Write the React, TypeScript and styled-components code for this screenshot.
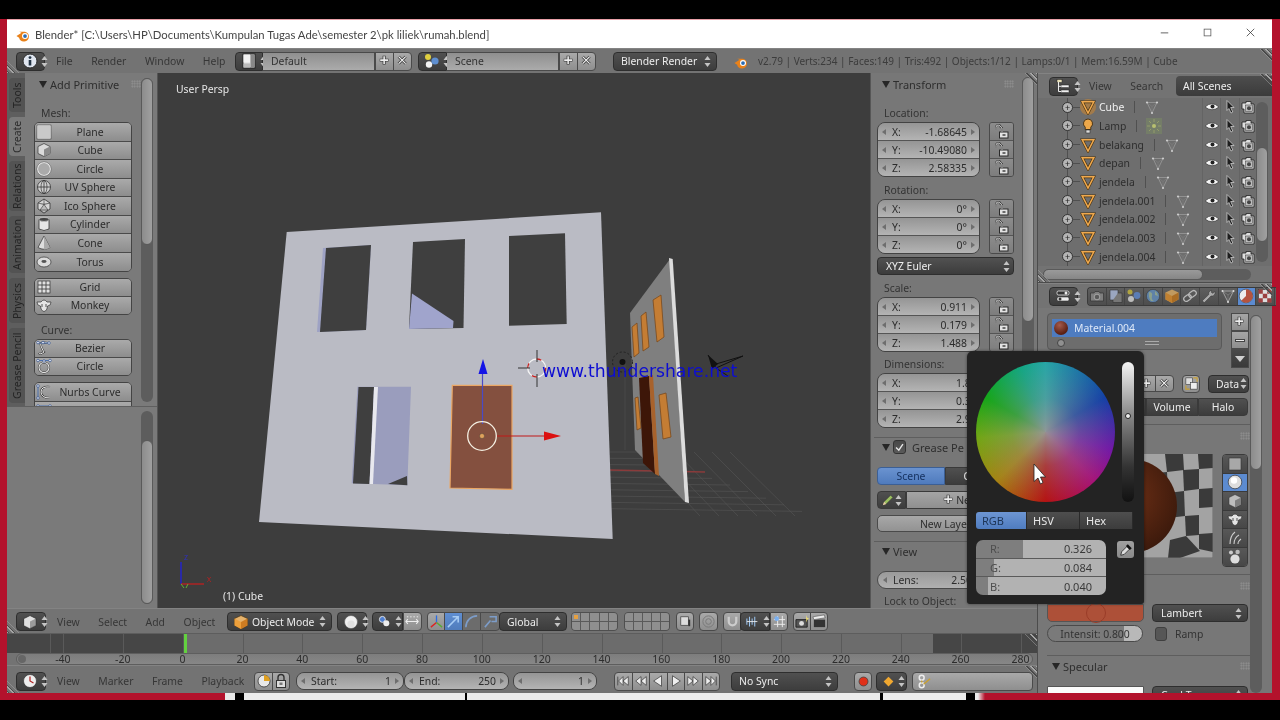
import React from 'react';
import styled, { createGlobalStyle } from 'styled-components';

const Global = createGlobalStyle`
  html,body{margin:0;padding:0;background:#000;overflow:hidden}
  #root{width:1280px;height:720px}
  *{box-sizing:border-box}
`;

const Page = styled.div`
  width:1280px;height:720px;background:#000;display:flex;flex-direction:column;overflow:hidden;
  font-family:"Noto Sans","Open Sans",sans-serif;font-size:10.4px;color:#333;filter:blur(.45px);
`;
const Letterbox = styled.div<{ $h: number }>`height:${p => p.$h}px;flex:none;background:#000;`;
const Desktop = styled.div`height:674px;flex:none;background:#b3122c;padding:0 8px 0 7px;`;
const Strip = styled.div`
  height:7px;flex:none;
  background:linear-gradient(90deg,#b3122c 225px,#e8e8e8 225px,#e8e8e8 235px,#000 235px,#000 244px,#ececec 244px,#ececec 465px,#000 465px,#000 467px,#ececec 467px,#ececec 880px,#000 880px,#000 883px,#ececec 883px,#ececec 966px,#000 966px,#000 975px,#ececec 975px,#ececec 978px,#b3122c 985px);
`;
const Win = styled.div`position:relative;height:100%;display:flex;flex-direction:column;`;
const TitleBar = styled.div`
  height:29px;flex:none;background:#fff;border-top:1px solid #e8a0a8;display:flex;align-items:center;padding-left:9px;gap:4px;
  font-size:11.3px;color:#444;font-family:Lato,"Noto Sans",sans-serif;
`;
const WinBtn = styled.div`width:43px;display:flex;justify-content:center;`;
const WinBtns = styled.div`margin-left:auto;margin-right:-1px;display:flex;`;

const Svg = styled.svg.attrs<{ $s?: number }>(p => ({ width: p.$s ?? 16, height: p.$s ?? 16, viewBox: '0 0 16 16' }))`display:block;flex:none;`;
const UD = styled.svg.attrs({ width: 7, height: 13, viewBox: '0 0 7 13' })`display:block;flex:none;`;
const Updown = ({ c = '#c4c4c4' }: { c?: string }) => <UD><path d="M3.5 1L6.5 5H.5ZM3.5 12L.5 8h6Z" fill={c} /></UD>;

/* ---------- icons ---------- */
const Logo = () => <Svg $s={15}><path d="M0.5 9.5L6 6 3.5 5H9.5a5.3 5.3 0 1 1-6.2 6.5Z" fill="#e8811a" /><circle cx="9.6" cy="9.6" r="3.2" fill="#fff" /><circle cx="9.6" cy="9.6" r="2" fill="#2a6cb5" /></Svg>;
const Info = () => <Svg><circle cx="8" cy="8" r="7" fill="#e0e6f0" stroke="#2a2a2a" /><rect x="6.7" y="7" width="2.6" height="5.5" fill="#234" /><circle cx="8" cy="4.6" r="1.4" fill="#234" /></Svg>;
const Screen = () => <Svg><rect x="2" y="1" width="12" height="14" fill="#ddd" stroke="#222" /><rect x="2.5" y="1.5" width="6.5" height="8" fill="#f2f2f2" /><rect x="9.5" y="1.5" width="4" height="13" fill="#888" /><rect x="2.5" y="10.5" width="6.5" height="4" fill="#bbb" /></Svg>;
const SceneI = () => <Svg><circle cx="4" cy="4" r="3" fill="#e0d040" /><circle cx="5" cy="11.5" r="3.2" fill="#f2f2f2" /><circle cx="11" cy="8" r="3.6" fill="#5f8fd0" /></Svg>;
const Plus = ({ c = '#eee' }: { c?: string }) => <Svg $s={14}><path d="M7 2V12M2 7H12" stroke="#333" strokeWidth="3.4" /><path d="M7 2.5V11.5M2.5 7H11.5" stroke={c} strokeWidth="1.8" /></Svg>;
const Cross = () => <Svg $s={14}><path d="M3 3L11 11M11 3L3 11" stroke="#333" strokeWidth="3.2" /><path d="M3 3L11 11M11 3L3 11" stroke="#eee" strokeWidth="1.5" /></Svg>;
const Lock = () => <Svg><rect x="5.5" y="8" width="8.5" height="6" fill="#e2e2e2" stroke="#2a2a2a" /><rect x="8.5" y="10" width="3" height="2" fill="#6a6a6a" /><path d="M2 6V3.5A2.2 2.2 0 0 1 6.5 3L8 4V8" fill="none" stroke="#1e1e1e" strokeWidth="1.7" /><path d="M2 6V3.5A2.2 2.2 0 0 1 6.5 3L8 4V8" fill="none" stroke="#fff" strokeWidth=".8" /></Svg>;
const LockClosed = () => <Svg><rect x="3.5" y="7.5" width="9" height="7" fill="#ddd" stroke="#333" /><rect x="6.5" y="9.5" width="3" height="2.5" fill="#777" /><path d="M5 7.5V4.5a3 3 0 0 1 6 0V7.5" fill="none" stroke="#333" strokeWidth="1.4" /></Svg>;
const Bulb = () => <Svg><path d="M8 1a4.6 4.6 0 0 0-2.8 8.2V11.5H10.8V9.2A4.6 4.6 0 0 0 8 1Z" fill="#eea84a" stroke="#4a3416" /><rect x="6" y="12" width="4" height="3" fill="#ddd" stroke="#333" strokeWidth=".6" /></Svg>;
const Tri = ({ glow }: { glow?: boolean }) => <Svg>{glow && <circle cx="8" cy="8" r="8" fill="#b5803f" opacity=".75" />}<path d="M2.2 2.8H13.8L8 14Z" fill="none" stroke="#4b3412" strokeWidth="2.8" /><path d="M2.2 2.8H13.8L8 14Z" fill="none" stroke="#f0a94e" strokeWidth="1.5" /></Svg>;
const MeshData = () => <Svg><path d="M3 3.5H13L8 14Z" fill="none" stroke="#9a9a9a" strokeWidth=".8" /><path d="M3 3.5L8 7.5L13 3.5M8 7.5V14" fill="none" stroke="#8a8a8a" strokeWidth=".4" /><circle cx="3" cy="3.5" r="1.1" fill="#ccc" /><circle cx="13" cy="3.5" r="1.1" fill="#ccc" /><circle cx="8" cy="14" r="1.1" fill="#ccc" /></Svg>;
const LampData = () => <Svg><rect width="16" height="16" fill="#7a8a64" opacity=".55" /><circle cx="8" cy="8" r="2" fill="#b8c070" /><path d="M8 1V4M8 12V15M1 8H4M12 8H15M3 3L5 5M13 3L11 5M3 13L5 11M13 13L11 11" stroke="#939c6a" /></Svg>;
const Eye = () => <Svg><path d="M1 8Q8 1.5 15 8Q8 13.5 1 8Z" fill="#f4f4f4" stroke="#3a3a3a" strokeWidth=".7" /><circle cx="8.5" cy="7.6" r="2" fill="#222" /></Svg>;
const Pointer = () => <Svg><path d="M5 1.5L12 8.5H8.7L10.8 13L9 14L6.9 9.5L5 11.5Z" fill="#1e1e1e" stroke="#ddd" strokeWidth=".7" /></Svg>;
const Cam = () => <Svg><path d="M2 4H6V2.5H11V5H14V14H4V10H2Z" fill="#dedede" stroke="#222" strokeWidth=".8" /><rect x="5.5" y="6" width="7" height="6.6" fill="#bdbdbd" stroke="#333" strokeWidth=".5" /><circle cx="9" cy="9.3" r="2" fill="#444" /></Svg>;
const Cube = ({ c = '#e0e0e0' }: { c?: string }) => <Svg><path d="M8 1.5L14 4.5V11.5L8 14.5L2 11.5V4.5Z" fill={c} stroke="#333" strokeWidth=".8" /><path d="M2 4.5L8 7.5V14.5L2 11.5Z" fill={c} opacity=".7" /><path d="M8 7.5L14 4.5V11.5L8 14.5Z" fill="#777" opacity=".65" /></Svg>;
const OrangeCube = () => <Svg><path d="M8 1.5L14.5 4.5V11.5L8 15L1.5 11.5V4.5Z" fill="#e6b36c" stroke="#4a3312" strokeWidth=".7" /><path d="M8 8V15L14.5 11.5V4.5Z" fill="#cd7c22" /><path d="M8 8V15L1.5 11.5V4.5Z" fill="#eda03c" /></Svg>;
const Ball = () => <Svg><circle cx="8" cy="8" r="6.5" fill="#f0f0f0" stroke="#555" strokeWidth=".6" /><circle cx="8" cy="10" r="3.6" fill="#cfcfcf" opacity=".5" /></Svg>;
const Wire = ({ children }: { children?: React.ReactNode }) => <Svg>{children}</Svg>;
const prim: Record<string, React.ReactNode> = {
  plane: <Wire><rect x="1.5" y="1.5" width="13" height="13" fill="#c9c9c9" stroke="#eee" /><rect x="1" y="1" width="14" height="14" fill="none" stroke="#444" strokeWidth=".6" /></Wire>,
  cube: <Wire><path d="M8 1.5L14 4.5V11.5L8 14.5L2 11.5V4.5Z" fill="#dadada" stroke="#333" strokeWidth=".7" /><path d="M8 7.5L14 4.5V11.5L8 14.5Z" fill="#8a8a8a" /></Wire>,
  circle: <Wire><circle cx="8" cy="8" r="6.5" fill="#aaa" stroke="#eee" strokeWidth="1.2" /><circle cx="8" cy="8" r="7.2" fill="none" stroke="#444" strokeWidth=".4" /></Wire>,
  uv: <Wire><circle cx="8" cy="8" r="6.5" fill="#d0d0d0" stroke="#333" strokeWidth=".8" /><path d="M1.5 8H14.5M8 1.5V14.5" stroke="#333" strokeWidth=".8" /><ellipse cx="8" cy="8" rx="3" ry="6.5" fill="none" stroke="#333" strokeWidth=".7" /></Wire>,
  ico: <Wire><path d="M8 1L14 5L14 11L8 15L2 11L2 5Z" fill="#d6d6d6" stroke="#333" strokeWidth=".8" /><path d="M2 5L8 6.5L14 5M8 6.5L4 12H12ZM8 6.5V1M4 12L8 15L12 12" fill="#bbb" stroke="#333" strokeWidth=".6" /></Wire>,
  cyl: <Wire><path d="M3 3V13Q8 16 13 13V3" fill="#e6e6e6" stroke="#333" strokeWidth=".8" /><ellipse cx="8" cy="3.4" rx="5" ry="2" fill="#444" stroke="#ddd" strokeWidth=".6" /></Wire>,
  cone: <Wire><path d="M8 1L14 12.5Q8 16 2 12.5Z" fill="#dedede" stroke="#333" strokeWidth=".7" /><path d="M8 1L14 12.5Q11 14.5 8 14.5Z" fill="#aaa" /></Wire>,
  torus: <Wire><ellipse cx="8" cy="8" rx="7" ry="5" fill="#dcdcdc" stroke="#333" strokeWidth=".7" /><ellipse cx="8" cy="7.5" rx="2.6" ry="1.4" fill="#555" /></Wire>,
  grid: <Wire><rect x="2" y="2" width="12" height="12" fill="#e0e0e0" stroke="#333" strokeWidth=".7" /><path d="M6 2V14M10 2V14M2 6H14M2 10H14" stroke="#444" strokeWidth=".9" /></Wire>,
  monkey: <Wire><path d="M5 5Q8 1 11 5L15 5Q15 9 11.5 9Q11 14 8 14.5Q5 14 4.5 9Q1 9 1 5Z" fill="#e4e4e4" stroke="#333" strokeWidth=".7" /><path d="M6 7V10M10 7V10" stroke="#444" strokeWidth=".9" /></Wire>,
  bezier: <Wire><path d="M12 3Q3 1 5 6T8 12 Q4 15 3 13" fill="none" stroke="#333" strokeWidth="2" /><path d="M12 3Q3 1 5 6T8 12 Q4 15 3 13" fill="none" stroke="#e8e8e8" strokeWidth="1" /><path d="M1 3H13" stroke="#4c72b0" /><circle cx="2" cy="2.6" r="1.3" fill="#e8eef8" stroke="#34508a" strokeWidth=".7" /><circle cx="7" cy="2.6" r="1.3" fill="#e8eef8" stroke="#34508a" strokeWidth=".7" /><circle cx="13" cy="3" r="1.3" fill="#e8eef8" stroke="#34508a" strokeWidth=".7" /></Wire>,
  ccircle: <Wire><circle cx="8" cy="9.5" r="5" fill="none" stroke="#333" strokeWidth="2.2" /><circle cx="8" cy="9.5" r="5" fill="none" stroke="#eee" strokeWidth="1.1" /><path d="M1 2.5H15" stroke="#4c72b0" /><circle cx="2" cy="2.5" r="1.3" fill="#e8eef8" stroke="#34508a" strokeWidth=".7" /><circle cx="8" cy="3" r="1.3" fill="#e8eef8" stroke="#34508a" strokeWidth=".7" /><circle cx="14" cy="2.5" r="1.3" fill="#e8eef8" stroke="#34508a" strokeWidth=".7" /></Wire>,
  nurbs: <Wire><path d="M14 3Q5 2 5 8T14 14" fill="none" stroke="#333" strokeWidth="2" /><path d="M14 3Q5 2 5 8T14 14" fill="none" stroke="#eee" strokeWidth="1" /><path d="M2 2V14" stroke="#4c72b0" /><circle cx="2" cy="2" r="1.3" fill="#e8eef8" stroke="#34508a" strokeWidth=".7" /><circle cx="2" cy="14" r="1.3" fill="#e8eef8" stroke="#34508a" strokeWidth=".7" /></Wire>,
  ncircle: <Wire><path d="M2 14Q8 2 14 14" fill="none" stroke="#eee" strokeWidth="1.1" /><path d="M1 3H15" stroke="#4c72b0" /><circle cx="2" cy="3" r="1.3" fill="#e8eef8" stroke="#34508a" strokeWidth=".7" /><circle cx="14" cy="3" r="1.3" fill="#e8eef8" stroke="#34508a" strokeWidth=".7" /></Wire>,
};
const Outl = () => <Svg><rect x="2" y="1.5" width="5" height="3" fill="#e8e0b8" stroke="#222" strokeWidth=".5" /><rect x="6" y="7" width="8" height="2.6" fill="#f0f0f0" stroke="#222" strokeWidth=".5" /><rect x="6" y="12" width="8" height="2.6" fill="#f0f0f0" stroke="#222" strokeWidth=".5" /><path d="M3.5 4V13.5H6M3.5 8.3H6" stroke="#eee" strokeWidth="1" fill="none" /></Svg>;
const PropsI = () => <Svg><rect x="2" y="3" width="12" height="4" rx="1.5" fill="#333" stroke="#eee" strokeWidth=".8" /><circle cx="11" cy="5" r="1.5" fill="#eee" /><rect x="2" y="9" width="12" height="4" rx="1.5" fill="#eee" stroke="#333" strokeWidth=".6" /><circle cx="5" cy="11" r="1.5" fill="#333" /></Svg>;
const tabIcons: React.ReactNode[] = [
  <Svg key="0"><path d="M1.5 5H5L6 3.5H10L11 5H14.5V13H1.5Z" fill="#7f7f7f" stroke="#333" strokeWidth=".7" /><circle cx="8" cy="9" r="2.8" fill="#5a5a5a" stroke="#bbb" strokeWidth=".7" /></Svg>,
  <Svg key="1"><path d="M2 2H10V12H2Z" fill="#9aa6c0" stroke="#333" strokeWidth=".6" /><path d="M5 12V14.5H14V5H10" fill="#777" stroke="#333" strokeWidth=".6" /></Svg>,
  <Svg key="2"><circle cx="4" cy="4" r="2.5" fill="#b0a440" /><circle cx="5" cy="11" r="3" fill="#bdbdbd" /><circle cx="11" cy="7.5" r="3.4" fill="#5b7db5" /></Svg>,
  <Svg key="3"><circle cx="8" cy="8" r="6.6" fill="#5f82a8" stroke="#333" strokeWidth=".5" /><path d="M4 4Q8 4 7 8T9 13L6 13Q3 9 4 4ZM10 3Q13 5 13 8L10 7Z" fill="#8aa08c" /></Svg>,
  <Svg key="4"><path d="M8 1.5L14.5 4.5V11.5L8 15L1.5 11.5V4.5Z" fill="#c09a60" /><path d="M8 8V15L14.5 11.5V4.5Z" fill="#aa6d24" /><path d="M8 8V15L1.5 11.5V4.5Z" fill="#c08030" /></Svg>,
  <Svg key="5"><rect x="1.5" y="7.5" width="8" height="5" rx="2.5" transform="rotate(-35 5.5 10)" fill="none" stroke="#b8b8b8" strokeWidth="1.3" /><rect x="6.5" y="3.5" width="8" height="5" rx="2.5" transform="rotate(-35 10.5 6)" fill="none" stroke="#b8b8b8" strokeWidth="1.3" /></Svg>,
  <Svg key="6"><path d="M2 14L3.5 14.5L10 8A3.5 3.5 0 0 0 14 3.5L11.8 5.3L10.5 4.5L10.5 2.4A3.5 3.5 0 0 0 7.8 6.5L1.5 12.5Z" fill="#aaa" stroke="#333" strokeWidth=".5" /></Svg>,
  <Svg key="7"><path d="M2.5 3H13.5L8 14Z" fill="none" stroke="#b5b5b5" strokeWidth=".8" /><path d="M2.5 3L8 7L13.5 3M8 7V14" fill="none" stroke="#aaa" strokeWidth=".4" /><circle cx="2.5" cy="3" r="1" fill="#ddd" /><circle cx="13.5" cy="3" r="1" fill="#ddd" /><circle cx="8" cy="14" r="1" fill="#ddd" /></Svg>,
  <Svg key="8"><circle cx="8" cy="8" r="6.8" fill="#ececec" stroke="#333" strokeWidth=".6" /><path d="M8 1.2A6.8 6.8 0 0 1 14.8 8L8 8L3.2 12.8A6.8 6.8 0 0 0 8 14.8A6.8 6.8 0 0 0 14.8 8L8 8Z" fill="#b5533f" /></Svg>,
  <Svg key="9"><rect x="1.5" y="1.5" width="13" height="13" fill="#ddd" stroke="#333" strokeWidth=".6" /><path d="M1.5 1.5H5.8V5.8H1.5ZM10.2 1.5H14.5V5.8H10.2ZM5.8 5.8H10.2V10.2H5.8ZM1.5 10.2H5.8V14.5H1.5ZM10.2 10.2H14.5V14.5H10.2Z" fill="#9c3f3f" /></Svg>,
];
const sideIcons: React.ReactNode[] = [
  <Svg key="0"><rect x="2" y="2" width="12" height="12" fill="#a8a8a8" stroke="#333" strokeWidth=".6" /></Svg>,
  <Svg key="1"><circle cx="8" cy="8" r="6.8" fill="#ddd" stroke="#222" strokeWidth=".6" /><circle cx="7" cy="6.5" r="3.2" fill="#fff" /></Svg>,
  <Svg key="2"><path d="M8 1.5L14 4.5V11.5L8 14.5L2 11.5V4.5Z" fill="#bdbdbd" stroke="#333" strokeWidth=".5" /><path d="M8 7.5L14 4.5V11.5L8 14.5Z" fill="#7f7f7f" /></Svg>,
  prim.monkey,
  <Svg key="4"><path d="M3 14Q3 6 8 2M7 14Q7 8 12 5M11 14Q11 11 14 9" fill="none" stroke="#ccc" strokeWidth="1.1" /></Svg>,
  <Svg key="5"><circle cx="8" cy="10" r="4.6" fill="#ddd" /><circle cx="4" cy="3.6" r="2" fill="#ccc" /><circle cx="10.6" cy="3" r="2.2" fill="#bbb" /></Svg>,
];

/* ---------- generic widgets ---------- */
const Bar = styled.div<{ $h: number; $pt?: number }>`
  position:relative;height:${p => p.$h}px;flex:none;display:flex;align-items:center;padding:${p => p.$pt ?? 0}px 0 0 9px;background:#737373;border-top:1px solid #838383;
`;
const Menu = styled.div<{ $w: number; $gap?: number }>`width:${p => p.$w}px;flex:none;display:flex;gap:${p => p.$gap ?? 18.5}px;padding-left:11px;color:#363636;`;
const Dark = styled.div<{ $w: number; $h?: number; $ml?: number; $l?: boolean; $r?: boolean; $pl?: number; $pr?: number; $gap?: number }>`
  width:${p => p.$w}px;height:${p => p.$h ?? 19}px;flex:none;margin-left:${p => p.$ml ?? 0}px;display:flex;align-items:center;gap:${p => p.$gap ?? 3}px;padding:0 ${p => p.$pr ?? 5}px 0 ${p => p.$pl ?? 5}px;
  background:linear-gradient(#505050,#3d3d3d);border:1px solid #2e2e2e;color:#ededed;
  border-radius:${p => p.$l ? '4px 0 0 4px' : p.$r ? '0 4px 4px 0' : '4px'};
`;
const Spread = styled.span`flex:1;min-width:0;white-space:nowrap;overflow:hidden;`;
const Light = styled.div<{ $w: number; $h?: number; $ml?: number; $rad?: string; $bg?: string }>`
  width:${p => p.$w}px;height:${p => p.$h ?? 19}px;flex:none;margin-left:${p => p.$ml ?? 0}px;display:flex;align-items:center;justify-content:center;
  background:${p => p.$bg ?? 'linear-gradient(#a9a9a9,#8f8f8f)'};border:1px solid #4a4a4a;border-radius:${p => p.$rad ?? '0'};color:#2c2c2c;margin-right:-1px;
`;
const FieldBox = styled.div<{ $w: number }>`
  width:${p => p.$w}px;height:19px;flex:none;display:flex;align-items:center;padding-left:8px;color:#333;
  background:linear-gradient(#8f8f8f,#ababab);border:1px solid #4a4a4a;border-left:none;
`;
const Inline = styled.div<{ $ml?: number }>`display:flex;flex:none;align-items:center;margin-left:${p => p.$ml ?? 0}px;`;
const Stats = styled.div`margin-left:9px;color:#3c3c3c;white-space:nowrap;font-size:10px;`;
const Hatch = styled.span<{ $pos: 'tr' | 'bl' }>`
  position:absolute;width:12px;height:12px;
  ${p => p.$pos === 'tr' ? 'top:0;right:0;clip-path:polygon(0 0,100% 0,100% 100%);' : 'bottom:0;left:0;clip-path:polygon(0 0,0 100%,100% 100%);'}
  background:repeating-linear-gradient(45deg,#a5a5a5 0 1px,#4a4a4a 1px 2px,transparent 2px 4px);
`;

/* ---------- layout ---------- */
const Body = styled.div`flex:1;min-height:0;display:flex;flex-direction:column;background:#737373;`;
const Panes = styled.div`flex:1;min-height:0;display:flex;`;
const LeftPane = styled.div`width:1030px;flex:none;display:flex;flex-direction:column;position:relative;`;
const RightPane = styled.div`width:235px;flex:none;display:flex;flex-direction:column;border-left:1px solid #4c4c4c;`;
const Upper = styled.div`height:535px;flex:none;display:flex;`;
const Shelf = styled.div`width:150px;flex:none;display:flex;flex-direction:column;background:#7a7a7a;`;
const ShelfTop = styled.div`height:334px;flex:none;display:flex;border-bottom:1px solid #5f5f5f;`;
const TabCol = styled.div`width:18px;flex:none;background:#5e5e5e;display:flex;flex-direction:column;align-items:flex-end;padding-top:5px;gap:5px;`;
const VTab = styled.div<{ $h: number; $on?: boolean }>`
  width:16px;height:${p => p.$h}px;flex:none;writing-mode:vertical-rl;transform:rotate(180deg);text-align:center;line-height:16px;font-size:10.5px;white-space:nowrap;
  background:${p => p.$on ? '#7a7a7a' : '#535353'};color:${p => p.$on ? '#2c2c2c' : '#242424'};border-radius:0 4px 4px 0;
`;
const ShelfMain = styled.div`flex:1;min-width:0;display:flex;`;
const ShelfContent = styled.div`width:116px;flex:none;padding-left:9px;overflow:hidden;`;
const PanelHead = styled.div<{ $h?: number; $pl?: number }>`
  height:${p => p.$h ?? 22}px;display:flex;align-items:center;padding-left:${p => p.$pl ?? 5}px;color:#2e2e2e;font-size:11px;white-space:nowrap;
`;
const Arrow = styled.span`width:0;height:0;border-left:4px solid transparent;border-right:4px solid transparent;border-top:7px solid #262626;margin-right:3px;flex:none;`;
const Grip = styled.span<{ $ml?: string }>`
  width:10px;height:8px;flex:none;margin-left:${p => p.$ml ?? 'auto'};
  background-image:radial-gradient(#939393 45%,transparent 50%);background-size:2.5px 2.5px;
`;
const Lbl = styled.div<{ $mt: number; $pl?: number }>`height:14px;line-height:14px;margin-top:${p => p.$mt}px;padding-left:${p => p.$pl ?? 7}px;color:#333;white-space:nowrap;`;
const BtnGroup = styled.div<{ $mt: number }>`margin-top:${p => p.$mt}px;width:98px;border:1px solid #444;border-radius:5px;overflow:hidden;`;
const ToolBtn = styled.div<{ $h: number }>`
  height:${p => p.$h}px;position:relative;display:flex;align-items:center;padding-left:1px;color:#2c2c2c;background:linear-gradient(#aaa,#8d8d8d);border-bottom:1px solid #4a4a4a;
  &:last-child{border-bottom:none;}
`;
const ToolTxt = styled.span`flex:1;text-align:center;padding-right:3px;white-space:nowrap;`;
const Track = styled.div<{ $mt?: number; $h: number; $ml?: number }>`
  width:12px;height:${p => p.$h}px;flex:none;margin-top:${p => p.$mt ?? 0}px;margin-left:${p => p.$ml ?? 0}px;background:#5d5d5d;border-radius:6px;display:flex;flex-direction:column;
`;
const Thumb = styled.div<{ $h: number; $top?: number }>`
  height:${p => p.$h}px;margin-top:${p => p.$top ?? 0}px;border-radius:6px;border:1px solid #5a5a5a;background:linear-gradient(90deg,#8c8c8c,#a0a0a0);
`;
const ShelfBottom = styled.div`flex:1;display:flex;justify-content:flex-end;padding:4px 4px 0 0;`;

const Viewport = styled.div`flex:1;min-width:0;position:relative;background:#3d3d3d;overflow:hidden;border-left:1px solid #555;`;
const Canvas = styled.svg`display:block;`;
const ViewTxt = styled.div<{ $x: number; $y: number }>`position:absolute;left:${p => p.$x}px;top:${p => p.$y}px;color:#e6e6e6;line-height:14px;white-space:nowrap;`;
const Watermark = styled.div`position:absolute;left:384px;top:286px;color:#0d0dd2;font-family:"DejaVu Sans",sans-serif;font-size:17.2px;line-height:24px;white-space:nowrap;`;

const Region = styled.div`width:167px;flex:none;display:flex;background:#777;border-left:1px solid #565656;position:relative;`;
const RegionContent = styled.div`width:151px;flex:none;padding-left:6px;overflow:hidden;height:535px;`;
const FieldRow = styled.div<{ $mt: number }>`display:flex;gap:9px;margin-top:${p => p.$mt}px;width:137px;`;
const NumGroup = styled.div<{ $w: number; $h?: number }>`width:${p => p.$w}px;height:${p => p.$h ?? 55}px;flex:none;display:flex;flex-direction:column;border:1px solid #434343;border-radius:8px;overflow:hidden;`;
const NumRow = styled.div`
  flex:1;min-height:0;display:flex;align-items:center;padding:0 4px;color:#2c2c2c;background:linear-gradient(#959595,#b4b4b4);border-bottom:1px solid #555;
  &:last-child{border-bottom:none;}
`;
const Caret = styled.span<{ $dir: 'l' | 'r' }>`
  width:0;height:0;flex:none;border-top:3px solid transparent;border-bottom:3px solid transparent;
  ${p => p.$dir === 'l' ? 'border-right:4px solid #6e6e6e;margin-right:6px;' : 'border-left:4px solid #6e6e6e;margin-left:4px;'}
`;
const NumVal = styled.span`margin-left:auto;white-space:nowrap;`;
const LockCol = styled.div`width:25px;height:55px;flex:none;display:flex;flex-direction:column;border:1px solid #4a4a4a;border-radius:3px;overflow:hidden;`;
const LockBtn = styled.div`flex:1;min-height:0;display:flex;align-items:center;justify-content:center;background:linear-gradient(#8c8c8c,#7d7d7d);border-bottom:1px solid #555;&:last-child{border-bottom:none;}`;
const DarkWide = styled.div<{ $mt: number; $w?: number; $h?: number }>`
  width:${p => p.$w ?? 137}px;height:${p => p.$h ?? 18}px;flex:none;margin-top:${p => p.$mt}px;display:flex;align-items:center;padding:0 3px 0 8px;color:#eee;
  background:linear-gradient(#515151,#3c3c3c);border:1px solid #2e2e2e;border-radius:4px;
`;
const Sep = styled.div<{ $mt: number; $w?: number; $ml?: number }>`height:1px;width:${p => p.$w ?? 145}px;margin-top:${p => p.$mt}px;margin-left:${p => p.$ml ?? -3}px;background:#5e5e5e;`;
const Check = styled.span`width:13px;height:14px;flex:none;border-radius:3px;background:linear-gradient(#484848,#5a5a5a);border:1px solid #333;margin-right:6px;display:flex;align-items:center;justify-content:center;`;
const SegRow = styled.div<{ $mt: number; $w?: number }>`margin-top:${p => p.$mt}px;width:${p => p.$w ?? 137}px;height:18px;display:flex;flex:none;`;
const SegBtn = styled.div<{ $w: number; $on?: boolean; $rad?: string; $dark?: boolean }>`
  width:${p => p.$w}px;flex:none;display:flex;align-items:center;justify-content:center;white-space:nowrap;
  background:${p => p.$on ? 'linear-gradient(#6a93d0,#4f7bbd)' : p.$dark ? 'linear-gradient(#505050,#3c3c3c)' : 'linear-gradient(#a5a5a5,#8f8f8f)'};
  color:${p => p.$on ? '#14305e' : p.$dark ? '#eee' : '#2c2c2c'};border:1px solid ${p => p.$on ? '#3c5f94' : '#3a3a3a'};border-radius:${p => p.$rad ?? '0'};
`;
const LightWide = styled.div<{ $mt: number; $w?: number; $h?: number; $rad?: number }>`
  margin-top:${p => p.$mt}px;width:${p => p.$w ?? 137}px;height:${p => p.$h ?? 17}px;flex:none;display:flex;align-items:center;justify-content:center;color:#2e2e2e;white-space:nowrap;
  background:linear-gradient(#a8a8a8,#929292);border:1px solid #4a4a4a;border-radius:${p => p.$rad ?? 5}px;
`;
const PillField = styled.div<{ $mt: number }>`
  margin-top:${p => p.$mt}px;width:137px;height:18px;display:flex;align-items:center;padding:0 5px;color:#2c2c2c;border:1px solid #4a4a4a;border-radius:9px;background:linear-gradient(#9a9a9a,#b0b0b0);
`;

/* ---------- 3D header etc ---------- */
const Layers = styled.div<{ $ml: number; $w: number }>`
  width:${p => p.$w}px;height:19px;flex:none;margin-left:${p => p.$ml}px;display:grid;grid-template-columns:repeat(5,1fr);grid-template-rows:1fr 1fr;border:1px solid #4f4f4f;border-radius:4px;overflow:hidden;background:#5a5a5a;gap:1px;
`;
const LayerCell = styled.span<{ $dot?: boolean }>`
  background:#8f8f8f;display:flex;align-items:center;justify-content:center;
  &::after{content:"";width:4px;height:4px;background:${p => p.$dot ? '#e6a040' : 'transparent'};}
`;
const Graph = styled.div`
  height:20px;flex:none;position:relative;border-top:1px solid #5d5d5d;
  background:
    linear-gradient(90deg,transparent 177px,#63d13f 177px,#63d13f 180px,transparent 180px),
    repeating-linear-gradient(90deg,#5a5a5a 0,#5a5a5a 1px,transparent 1px,transparent 59.85px) 56px 0,
    linear-gradient(90deg,#464646 177px,#6c6c6c 177px,#6c6c6c 926px,#464646 926px);
`;
const Ruler = styled.div`
  height:12px;flex:none;display:flex;align-items:center;margin-left:9px;margin-right:4px;padding-left:16px;border:1px solid #5e5e5e;border-radius:6px;background:linear-gradient(#7d7d7d,#878787);overflow:hidden;position:relative;
`;
const Tick = styled.span`width:59.85px;flex:none;text-align:center;color:#2c2c2c;line-height:12px;font-size:10.5px;`;
const RulerDot = styled.span`position:absolute;left:1px;top:1px;width:8px;height:8px;border-radius:4px;background:#666;`;

/* ---------- outliner ---------- */
const ListBox = styled.div`height:168px;flex:none;display:flex;background:#6e6e6e;position:relative;`;
const Rows = styled.div`flex:1;min-width:0;position:relative;`;
const ORow = styled.div`
  height:18.67px;display:flex;align-items:center;padding-left:24px;position:relative;color:#2d2d2d;
  &::before{content:"";position:absolute;left:29px;top:0;bottom:0;width:1px;background:#4f4f4f;}
`;
const Expand = styled.span`
  width:11px;height:11px;flex:none;border-radius:6px;background:#b4b4b4;border:1px solid #333;position:relative;z-index:1;display:flex;align-items:center;justify-content:center;color:#222;font-size:9px;line-height:9px;
`;
const Conn = styled.span`width:7px;height:1px;flex:none;background:#4f4f4f;`;
const OName = styled.span<{ $sel?: boolean }>`margin-left:3px;color:${p => p.$sel ? '#f2f2f2' : '#2e2e2e'};white-space:nowrap;`;
const OBar = styled.span`width:1px;height:12px;flex:none;background:#505050;margin:0 9px 0 10px;`;
const Restrict = styled.div`margin-left:auto;display:flex;width:54px;height:100%;flex:none;`;
const RCell = styled.div`width:18.3px;flex:none;display:flex;align-items:center;justify-content:center;border-left:1px solid #646464;`;
const HScrollRow = styled.div`height:17px;flex:none;padding:3px 0 0 5px;position:relative;background:#737373;border-bottom:1px solid #4c4c4c;`;
const HTrack = styled.div`width:208px;height:11px;background:#5d5d5d;border-radius:6px;`;
const HThumb = styled.div`width:160px;height:11px;background:linear-gradient(#9a9a9a,#868686);border-radius:6px;border:1px solid #5a5a5a;`;
const TabStrip = styled.div`display:flex;margin-left:9px;width:189px;height:19px;flex:none;background:#5c5c5c;border:1px solid #3a3a3a;border-right:none;border-radius:4px 0 0 4px;overflow:hidden;`;
const PTab = styled.div<{ $on?: boolean }>`width:18.7px;flex:none;display:flex;align-items:center;justify-content:center;background:${p => p.$on ? '#5c8bd0' : 'linear-gradient(#5e5e5e,#4d4d4d)'};border-right:1px solid #444;`;

/* ---------- properties ---------- */
const PropBody = styled.div`flex:1;min-height:0;display:flex;background:#777;overflow:hidden;position:relative;`;
const PropContent = styled.div`width:212px;flex:none;padding-left:9px;`;
const Row = styled.div<{ $mt: number; $h?: number; $gap?: number; $end?: boolean }>`
  display:flex;align-items:${p => p.$h ? 'center' : 'flex-start'};margin-top:${p => p.$mt}px;${p => p.$h ? `height:${p.$h}px;` : ''}gap:${p => p.$gap ?? 0}px;${p => p.$end ? 'justify-content:flex-end;width:202px;' : ''}
`;
const MatBox = styled.div`margin-top:0;width:175px;height:37px;flex:none;background:#6d6d6d;border:1px solid #595959;border-radius:4px;padding:5px 4px 0;position:relative;`;
const MatRow = styled.div`height:18px;display:flex;align-items:center;gap:6px;padding-left:2px;background:#4e7cc0;color:#dfe9f8;`;
const MatBall = styled.span`width:14px;height:14px;border-radius:50%;flex:none;background:radial-gradient(circle at 40% 30%,#a55b4c,#5a1f12 70%);`;
const MatFoot = styled.div`display:flex;align-items:center;height:12px;position:relative;padding-left:5px;`;
const MiniPlus = styled.span`width:8px;height:8px;border-radius:50%;background:#909090;border:1px solid #444;`;
const DragLines = styled.span`width:14px;height:4px;margin-left:80px;border-top:1px solid #aaa;border-bottom:1px solid #aaa;`;
const SideBtns = styled.div`width:18px;flex:none;display:flex;flex-direction:column;`;
const SideBtn = styled.div<{ $h: number; $dark?: boolean }>`
  height:${p => p.$h}px;display:flex;align-items:center;justify-content:center;border:1px solid #4a4a4a;background:${p => p.$dark ? 'linear-gradient(#4a4a4a,#3a3a3a)' : 'linear-gradient(#a5a5a5,#8e8e8e)'};
`;
const DownTri = styled.span`width:0;height:0;border-left:5px solid transparent;border-right:5px solid transparent;border-top:6px solid #d0d0d0;`;
const MinusBar = styled.span`width:10px;height:3px;background:#e8e8e8;border:.5px solid #444;`;
const Preview = styled.svg`display:block;flex:none;`;
const SideIcons = styled.div`width:26px;flex:none;border:1px solid #3a3a3a;border-radius:4px;overflow:hidden;`;
const SideIcon = styled.div<{ $on?: boolean }>`height:18.5px;display:flex;align-items:center;justify-content:center;background:${p => p.$on ? '#5c8bd0' : 'linear-gradient(#585858,#474747)'};border-bottom:1px solid #3a3a3a;&:last-child{border-bottom:none;}`;
const Swatch = styled.div<{ $c: string; $mark?: boolean }>`
  width:97px;height:18px;flex:none;background:${p => p.$c};border:1px solid #555;border-radius:0 0 5px 5px;display:flex;justify-content:center;align-items:center;
  ${p => p.$mark ? '&::after{content:"";width:18px;height:18px;border-radius:50%;border:1px solid #9a3c28;}' : ''}
`;
const IntField = styled.div`
  width:96px;height:17px;flex:none;border:1px solid #4a4a4a;border-radius:9px;display:flex;align-items:center;justify-content:center;color:#333;white-space:nowrap;
  background:linear-gradient(90deg,#7a7a7a 81%,#b8b8b8 81%);
`;
const RampCheck = styled.span`width:12px;height:14px;flex:none;margin-left:12px;margin-right:8px;border-radius:3px;background:#565656;border:1px solid #3f3f3f;`;

/* ---------- colour popup ---------- */
const Popup = styled.div`
  position:absolute;left:960px;top:332px;width:177px;height:253px;padding:11px 9px;z-index:5;background:#232323;border-radius:6px 6px 3px 3px;box-shadow:0 0 3px rgba(0,0,0,.5);color:#ddd;font-size:11px;
`;
const WheelRow = styled.div`display:flex;gap:7px;height:140px;`;
const Wheel = styled.div`
  width:139px;height:140px;border-radius:50%;flex:none;
  background:
    radial-gradient(circle,rgba(150,150,150,.95) 0,rgba(148,148,148,.7) 14%,rgba(145,145,145,.38) 34%,rgba(140,140,140,.08) 70%,transparent 85%),
    conic-gradient(#1fa8a8 0deg,#0a3aa8 60deg,#700ea8 105deg,#a80a78 135deg,#b80a0a 180deg,#a8820a 225deg,#70a80a 265deg,#0aa80f 300deg,#0aa884 340deg,#1fa8a8 360deg);
`;
const ValueSlider = styled.div`
  position:relative;width:12px;height:140px;flex:none;border-radius:6px;background:linear-gradient(#f4f4f4,#888 38%,#333 75%,#111);
`;
const ValueDot = styled.span`position:absolute;left:3px;top:51px;width:6px;height:6px;border-radius:50%;background:#eee;border:1px solid #222;`;
const ModeTabs = styled.div`display:flex;margin-top:10px;height:17px;`;
const ModeTab = styled.div<{ $w: number; $on?: boolean }>`
  width:${p => p.$w}px;flex:none;display:flex;align-items:center;padding-left:6px;color:${p => p.$on ? '#1d3557' : '#e8e8e8'};
  background:${p => p.$on ? 'linear-gradient(#6d96d3,#4f7cc0)' : 'linear-gradient(#4e4e4e,#3c3c3c)'};border-right:1px solid #2a2a2a;border-radius:${p => p.$on ? '3px 0 0 3px' : '0'};
`;
const RgbRow = styled.div`display:flex;margin-top:11px;gap:11px;`;
const RgbGroup = styled.div`width:130px;height:55px;flex:none;border-radius:7px;overflow:hidden;display:flex;flex-direction:column;`;
const RgbField = styled.div<{ $f: number }>`
  flex:1;min-height:0;display:flex;align-items:center;padding:0 14px;color:#3a3a3a;border-bottom:1px solid #5a5a5a;
  background:linear-gradient(90deg,#7e7e7e ${p => p.$f}%,#b2b2b2 ${p => p.$f}%);
  &:last-child{border-bottom:none;}
`;
const RgbLbl = styled.span`color:#4e4e4e;`;
const Dropper = styled.div`width:17px;height:17px;margin-top:1px;border-radius:3px;flex:none;background:linear-gradient(#a0a0a0,#8a8a8a);display:flex;align-items:center;justify-content:center;`;
const MouseCursor = styled.svg`position:absolute;left:1024px;top:444px;z-index:6;`;
const KeyInner = styled.div`width:100%;padding-left:4px;display:flex;`;
const AllScenes = styled.div`width:96px;height:20px;flex:none;margin-left:auto;display:flex;align-items:center;padding-left:7px;color:#eee;background:linear-gradient(#4d4d4d,#3b3b3b);border-radius:4px 0 0 4px;`;
const RightGap = styled.div`width:4px;flex:none;`;

const tabs: [string, number, boolean?][] = [['Tools', 34], ['Create', 39, true], ['Relations', 50], ['Animation', 57], ['Physics', 45], ['Grease Pencil', 75]];
const G1: [string, string][] = [['plane', 'Plane'], ['cube', 'Cube'], ['circle', 'Circle'], ['uv', 'UV Sphere'], ['ico', 'Ico Sphere'], ['cyl', 'Cylinder'], ['cone', 'Cone'], ['torus', 'Torus']];

const Tool = ({ i, t, h = 18.5 }: { i: string; t: string; h?: number }) => <ToolBtn $h={h}>{prim[i]}<ToolTxt>{t}</ToolTxt></ToolBtn>;
const Num = ({ l, v }: { l: string; v: string }) => (
  <NumRow><Caret $dir="l" /><span>{l}</span><NumVal>{v}</NumVal><Caret $dir="r" /></NumRow>
);
const Triple = ({ vals, mt }: { vals: string[]; mt: number }) => (
  <FieldRow $mt={mt}>
    <NumGroup $w={103}>{['X:', 'Y:', 'Z:'].map((l, i) => <Num key={l} l={l} v={vals[i]} />)}</NumGroup>
    <LockCol>{[0, 1, 2].map(i => <LockBtn key={i}><Lock /></LockBtn>)}</LockCol>
  </FieldRow>
);
const KeyField = () => <KeyInner><Svg $s={15}><circle cx="5" cy="4" r="2.6" fill="none" stroke="#eee" strokeWidth="1.6" /><circle cx="5" cy="12" r="2.6" fill="none" stroke="#eee" strokeWidth="1.6" /><path d="M7 11L14 5M5 7V9" stroke="#c9a030" strokeWidth="1.5" /></Svg></KeyInner>;
const outliner: [string, React.ReactNode, React.ReactNode, boolean?][] = [
  ['Cube', <Tri glow />, <MeshData />, true],
  ['Lamp', <Bulb />, <LampData />],
  ['belakang', <Tri />, <MeshData />],
  ['depan', <Tri />, <MeshData />],
  ['jendela', <Tri />, <MeshData />],
  ['jendela.001', <Tri />, <MeshData />],
  ['jendela.002', <Tri />, <MeshData />],
  ['jendela.003', <Tri />, <MeshData />],
  ['jendela.004', <Tri />, <MeshData />],
];
const frames = [-40, -20, 0, 20, 40, 60, 80, 100, 120, 140, 160, 180, 200, 220, 240, 260, 280];

const playIcons = ['M2 3V13M14 3V13L8 8ZM8 3V13L3 8Z', 'M14 3V13L8 8ZM8 3V13L2 8Z', 'M12 2V14L3 8Z', 'M4 2V14L13 8Z', 'M2 3V13L8 8ZM8 3V13L14 8Z', 'M14 3V13M2 3V13L8 8ZM8 3V13L13 8Z'];

const Scene3D = () => (
  <Canvas width={712} height={535} viewBox="158 73 712 535">
    {/* floor grid */}
    <g stroke="#555" strokeWidth=".6" fill="none">
      {[0, 1, 2, 3, 4, 5, 6, 7, 8, 9].map(i => <path key={i} d={`M610 ${452 + i * 6.3}L${640 + i * 18} ${452 + i * 6.6}`} />)}
      {[0, 1, 2, 3, 4, 5].map(i => <path key={i} d={`M${640 + i * 18} 452L${700 + i * 19} 516`} />)}
      <path d="M625 362V450" stroke="#505050" />
    </g>
    <path d="M610 470L705 472" stroke="#8a3b3b" strokeWidth="1.4" />
    {/* side house */}
    <path d="M670 259L630 313L635 450L685 502Z" fill="#7f7f7f" />
    <path d="M669 258L672.7 259L689 503L685 502Z" fill="#dcdcdc" />
    <g fill="#c47d34" stroke="#7a4a1e" strokeWidth=".8">
      <path d="M653 300L661 295L664 337L657 342Z" />
      <path d="M641 316L646 312L649 347L643 351Z" />
      <path d="M632 327L637 323L639 353L634 357Z" />
      <path d="M659 395L666 393L671 437L663 439Z" />
      <path d="M635 398L638 397L641 428L637 430Z" />
    </g>
    <path d="M639 378L649 376L655 474L643 463Z" fill="#3d1608" />
    <path d="M649 376L653 375L659 476L655 474Z" fill="#a8622c" />
    <circle cx="622.5" cy="362" r="3" fill="#111" />
    <circle cx="622.5" cy="362" r="10" fill="none" stroke="#222" strokeDasharray="2 2" />
    <path d="M708 355L716 368L743 356L716 364M716 368L728 376" fill="none" stroke="#111" />
    <path d="M708 355L718 364L712 369Z" fill="#111" />
    {/* front wall */}
    <path d="M286.7 232L601 212.3L612.7 539L259 522Z" fill="#babbc4" />
    <path d="M323 248L371 245L366 330L317 332Z" fill="#9ea2c4" />
    <path d="M326 248L371 245L366 330L320 332Z" fill="#3f3f3f" />
    <path d="M413 242L465 239L463.5 328L409 329Z" fill="#3f3f3f" />
    <path d="M412 293.5L453.5 321L453 328L409 329Z" fill="#a0a4cc" />
    <path d="M509 236L565 233.3L566.7 324L509 325.7Z" fill="#3f3f3f" />
    <path d="M357.5 386.7L411 386.7L407.3 485.3L351.7 483.3Z" fill="#9a9dbd" />
    <path d="M358.5 387L374 387L369.5 484L353 483.5Z" fill="#3f3f3f" />
    <path d="M374 387L378 387L373 484L369.5 484Z" fill="#e8e8ee" />
    <path d="M388 484L407 476L407.3 485.3Z" fill="#3f3f3f" />
    <path d="M452.3 385.3L512 385.3L512 489.3L450 488Z" fill="#84503f" stroke="#eba663" strokeWidth="1.2" />
    {/* manipulator */}
    <path d="M482.5 424V374" stroke="#4a4ac4" strokeWidth="1.2" />
    <path d="M483 359L487.5 374H478.5Z" fill="#1414e6" />
    <path d="M497 436H545" stroke="#c01818" strokeWidth="1.2" />
    <path d="M544 431.5L561 436L544 440.5Z" fill="#dc1010" />
    <circle cx="482" cy="436" r="14.3" fill="none" stroke="#f4efe2" strokeWidth="1.3" />
    <circle cx="482" cy="436" r="2.5" fill="#e0a25c" stroke="#333" strokeWidth=".4" />
    {/* 3d cursor */}
    <circle cx="536.7" cy="368" r="9" fill="none" stroke="#f4f4f4" strokeWidth="1.3" />
    <circle cx="536.7" cy="368" r="9" fill="none" stroke="#c52020" strokeWidth="1.3" strokeDasharray="5 9" />
    <path d="M537 350V362M537 374V387M518 368H530" stroke="#333" />
    {/* small axes */}
    <path d="M181 584V562" stroke="#2020e0" strokeWidth="1.3" />
    <path d="M181 584H204" stroke="#c02020" strokeWidth="1.3" />
    <path d="M181 584L184 588M188 584L186 588" stroke="#60b030" strokeWidth="1" />
    <text x="184" y="560" fontSize="7" fill="#3030c0" fontFamily="Noto Sans">Z</text>
    <text x="207" y="582" fontSize="7" fill="#c02020" fontFamily="Noto Sans">X</text>
  </Canvas>
);

const Prev = () => (
  <Preview width={166} height={104} viewBox="1047 454 166 104">
    <defs><radialGradient id="br" cx=".45" cy=".4" r=".6"><stop offset="0" stopColor="#6f3016" /><stop offset="1" stopColor="#3d1a0c" /></radialGradient></defs>
    <rect x="1047" y="454" width="166" height="104" fill="#a3a3a3" />
    <g fill="#3a3a3a">
      <path d="M1165 454H1183L1184 470L1167 472Z" />
      <path d="M1198 454H1213V468L1199 469Z" />
      <path d="M1183 470L1199 469V489L1184 491Z" />
      <path d="M1144 474L1167 472L1168 493L1144 495Z" />
      <path d="M1199 489L1213 488V507L1199 508Z" />
      <path d="M1168 493L1184 491L1185 516L1168 518Z" />
      <path d="M1185 516L1199 515V535L1186 536Z" />
      <path d="M1199 534L1213 533V552L1199 549Z" />
      <path d="M1170 540L1186 536L1200 551L1180 558H1168Z" />
    </g>
    <path d="M1213 454V558H1144" fill="none" stroke="#6a6a6a" />
    <circle cx="1130" cy="506" r="47" fill="url(#br)" />
  </Preview>
);

export default function App() {
  return (
    <Page>
      <Global />
      <Letterbox $h={19} />
      <Desktop>
        <Win>
          <TitleBar>
            <Logo />
            <span>Blender*  [C:\Users\HP\Documents\Kumpulan Tugas Ade\semester 2\pk liliek\rumah.blend]</span>
            <WinBtns>
              <WinBtn><Svg $s={12}><path d="M1 6.5H11" stroke="#333" /></Svg></WinBtn>
              <WinBtn><Svg $s={12}><rect x="1.5" y="1.5" width="9" height="9" fill="none" stroke="#555" /></Svg></WinBtn>
              <WinBtn><Svg $s={12}><path d="M1 1L11 11M11 1L1 11" stroke="#333" /></Svg></WinBtn>
            </WinBtns>
          </TitleBar>
          <Body>
            <Bar $h={25}>
              <Hatch $pos="bl" />
              <Hatch $pos="tr" />
              <Dark $w={29}><Info /><Updown /></Dark>
              <Menu $w={190}><span>File</span><span>Render</span><span>Window</span><span>Help</span></Menu>
              <Dark $w={28} $l><Screen /><Updown /></Dark>
              <FieldBox $w={112}>Default</FieldBox>
              <Light $w={19}><Plus /></Light><Light $w={19} $rad="0 4px 4px 0"><Cross /></Light>
              <Dark $w={29} $ml={7} $l><SceneI /><Updown /></Dark>
              <FieldBox $w={112}>Scene</FieldBox>
              <Light $w={19}><Plus /></Light><Light $w={19} $rad="0 4px 4px 0"><Cross /></Light>
              <Dark $w={104} $ml={18} $pl={7}><Spread>Blender Render</Spread><Updown /></Dark>
              <Inline $ml={17}><Logo /></Inline>
              <Stats>v2.79 | Verts:234 | Faces:149 | Tris:492 | Objects:1/12 | Lamps:0/1 | Mem:16.59M | Cube</Stats>
            </Bar>
            <Panes>
              <LeftPane>
                <Upper>
                  <Shelf>
                    <ShelfTop>
                      <TabCol>{tabs.map(([t, h, on]) => <VTab key={t} $h={h} $on={on}>{t}</VTab>)}</TabCol>
                      <ShelfMain>
                        <ShelfContent>
                          <PanelHead><Arrow />Add Primitive<Grip /></PanelHead>
                          <Lbl $mt={11}>Mesh:</Lbl>
                          <BtnGroup $mt={2}>{G1.map(([i, t]) => <Tool key={t} i={i} t={t} />)}</BtnGroup>
                          <BtnGroup $mt={6}><Tool i="grid" t="Grid" h={17.5} /><Tool i="monkey" t="Monkey" h={17.5} /></BtnGroup>
                          <Lbl $mt={8}>Curve:</Lbl>
                          <BtnGroup $mt={2}><Tool i="bezier" t="Bezier" h={17.5} /><Tool i="ccircle" t="Circle" h={17.5} /></BtnGroup>
                          <BtnGroup $mt={6}><Tool i="nurbs" t="Nurbs Curve" /><Tool i="ncircle" t="Nurbs Circle" /></BtnGroup>
                        </ShelfContent>
                        <Track $mt={5} $h={324}><Thumb $h={167} /></Track>
                      </ShelfMain>
                    </ShelfTop>
                    <ShelfBottom><Track $h={193}><Thumb $h={164} $top={29} /></Track></ShelfBottom>
                  </Shelf>
                  <Viewport>
                    <Scene3D />
                    <ViewTxt $x={18} $y={9}>User Persp</ViewTxt>
                    <ViewTxt $x={65} $y={516}>(1) Cube</ViewTxt>
                    <Watermark>www.thundershare.net</Watermark>
                  </Viewport>
                  <Region>
                    <Hatch $pos="tr" />
                    <RegionContent>
                      <PanelHead $pl={5}><Arrow />Transform<Grip $ml="58px" /></PanelHead>
                      <Lbl $mt={11}>Location:</Lbl>
                      <Triple mt={2} vals={['-1.68645', '-10.49080', '2.58335']} />
                      <Lbl $mt={6}>Rotation:</Lbl>
                      <Triple mt={2} vals={['0°', '0°', '0°']} />
                      <DarkWide $mt={3}><Spread>XYZ Euler</Spread><Updown /></DarkWide>
                      <Lbl $mt={6}>Scale:</Lbl>
                      <Triple mt={2} vals={['0.911', '0.179', '1.488']} />
                      <Lbl $mt={5}>Dimensions:</Lbl>
                      <FieldRow $mt={2}>
                        <NumGroup $w={137}>
                          <Num l="X:" v="1.8224 m" /><Num l="Y:" v="0.3580 m" /><Num l="Z:" v="2.9760 m" />
                        </NumGroup>
                      </FieldRow>
                      <Sep $mt={9} />
                      <PanelHead $h={18} $pl={5}><Arrow /><Check><Svg $s={11}><path d="M3 8L7 12L13 3" fill="none" stroke="#e8e8e8" strokeWidth="2" /></Svg></Check>Grease Pe</PanelHead>
                      <SegRow $mt={11}>
                        <SegBtn $w={68} $on $rad="4px 0 0 4px">Scene</SegBtn>
                        <SegBtn $w={69} $dark $rad="0 4px 4px 0">Object</SegBtn>
                      </SegRow>
                      <SegRow $mt={6}>
                        <SegBtn $w={29} $dark $rad="4px 0 0 4px"><Svg $s={14}><path d="M2 14L3.5 10L11 2.5L13.5 5L6 12.5Z" fill="#9cc060" stroke="#333" strokeWidth=".5" /><path d="M2 14L3.5 10L6 12.5Z" fill="#e8c8a8" /></Svg><Updown /></SegBtn>
                        <SegBtn $w={108} $rad="0 4px 4px 0"><Plus />New</SegBtn>
                      </SegRow>
                      <LightWide $mt={6}>New Layer</LightWide>
                      <Sep $mt={9} />
                      <PanelHead $h={18} $pl={5}><Arrow />View</PanelHead>
                      <PillField $mt={11}><Caret $dir="l" /><span>Lens:</span><NumVal>2.500 mm</NumVal><Caret $dir="r" /></PillField>
                      <Lbl $mt={5}>Lock to Object:</Lbl>
                    </RegionContent>
                    <Track $mt={4} $h={527}><Thumb $h={245} /></Track>
                  </Region>
                </Upper>
                <Bar $h={25} $pt={1}>
                  <Hatch $pos="bl" />
                  <Dark $w={30}><Cube /><Updown /></Dark>
                  <Menu $w={181}><span>View</span><span>Select</span><span>Add</span><span>Object</span></Menu>
                  <Dark $w={105}><OrangeCube /><Spread>Object Mode</Spread><Updown /></Dark>
                  <Dark $w={30} $ml={5}><Ball /><Updown /></Dark>
                  <Dark $w={31} $ml={5} $l><Svg $s={14}><circle cx="5" cy="5" r="3.4" fill="#4f7fd0" stroke="#eee" /><circle cx="9.5" cy="9.5" r="3.4" fill="#eee" /></Svg><Updown /></Dark>
                  <Light $w={19} $rad="0 4px 4px 0"><Svg $s={15}><path d="M1 8H14M3 5.5L1 8L3 10.5M12 5.5L14 8L12 10.5" fill="none" stroke="#eee" strokeWidth="1.2" /><path d="M2 3H14" stroke="#eee" strokeDasharray="1.5 2" /></Svg></Light>
                  <Inline $ml={6}>
                    <Light $w={18} $rad="4px 0 0 4px"><Svg $s={15}><path d="M8 9V1.5" stroke="#2a6be0" strokeWidth="1.4" /><path d="M8 9L2 14" stroke="#d22" strokeWidth="1.4" /><path d="M8 9L14 14" stroke="#5a3" strokeWidth="1.4" /></Svg></Light>
                    <Light $w={19} $bg="linear-gradient(#5f8ed2,#507cbc)"><Svg $s={15}><path d="M2 14L13 3M7 3H13V9" fill="none" stroke="#a8ccf4" strokeWidth="1.6" /></Svg></Light>
                    <Light $w={19} $bg="#6c6c6c"><Svg $s={15}><path d="M2 14A12 12 0 0 1 14 2" fill="none" stroke="#7c9cc8" strokeWidth="1.7" /></Svg></Light>
                    <Light $w={20} $bg="#6c6c6c" $rad="0 4px 4px 0"><Svg $s={15}><path d="M2 14L8 7M7 3H14V8H9" fill="none" stroke="#7c9cc8" strokeWidth="1.7" /></Svg></Light>
                  </Inline>
                  <Dark $w={68} $pl={7}><Spread>Global</Spread><Updown /></Dark>
                  <Layers $ml={4} $w={47}>{Array.from({ length: 10 }, (_, i) => <LayerCell key={i} $dot={i === 0} />)}</Layers>
                  <Layers $ml={6} $w={46}>{Array.from({ length: 10 }, (_, i) => <LayerCell key={i} />)}</Layers>
                  <Light $w={18} $ml={6} $rad="4px"><Svg $s={15}><rect x="3" y="3" width="8" height="9" fill="#ddd" stroke="#333" strokeWidth=".7" /><path d="M12 6V13" stroke="#333" strokeWidth="2" /></Svg></Light>
                  <Light $w={19} $ml={6} $rad="4px"><Svg $s={15}><circle cx="8" cy="8" r="6" fill="none" stroke="#777" /><circle cx="8" cy="8" r="3" fill="none" stroke="#777" /></Svg></Light>
                  <Light $w={18} $ml={6} $rad="4px 0 0 4px"><Svg $s={15}><path d="M4 3V8A4 4 0 0 0 12 8V3" fill="none" stroke="#ccc" strokeWidth="2.4" /></Svg></Light>
                  <Dark $w={30} $l><Svg $s={14}><path d="M1 4V11M4 2V13M7 4V11M10 2V13" stroke="#9cc4ee" strokeWidth="1.2" /><path d="M1 7.5H13" stroke="#eee" /></Svg><Updown /></Dark>
                  <Light $w={18} $rad="0 4px 4px 0"><Svg $s={15}><path d="M6 2V14M11 2V14M2 6H14M2 11H14" stroke="#eee" /><circle cx="5" cy="5" r="2.5" fill="#7ab0f0" /></Svg></Light>
                  <Inline $ml={6}>
                    <Light $w={18} $rad="4px 0 0 4px"><Svg $s={15}><path d="M1 6H13V14H1Z" fill="#555" stroke="#222" /><circle cx="7" cy="10" r="2.6" fill="#ddd" /><path d="M12 1L13 4L15 5L13 6L12 9" fill="#f2e070" /></Svg></Light>
                    <Light $w={18} $rad="0 4px 4px 0"><Svg $s={15}><path d="M2 6H14V14H2Z" fill="#333" /><path d="M1 3L13 1L14 4L2 6Z" fill="#eee" stroke="#333" strokeWidth=".5" /></Svg></Light>
                  </Inline>
                </Bar>
                <Graph><Hatch $pos="tr" /></Graph>
                <Ruler><RulerDot />{frames.map(f => <Tick key={f}>{f}</Tick>)}</Ruler>
                <Bar $h={28} $pt={3}>
                  <Hatch $pos="bl" />
                  <Dark $w={30}><Svg><circle cx="8" cy="8" r="6.5" fill="#eee" stroke="#333" strokeWidth=".7" /><path d="M8 3.5V8L11.5 10" stroke="#b02020" strokeWidth="1.2" fill="none" /></Svg><Updown /></Dark>
                  <Menu $w={208}><span>View</span><span>Marker</span><span>Frame</span><span>Playback</span></Menu>
                  <Light $w={19} $rad="4px 0 0 4px"><Svg><circle cx="8" cy="8" r="6" fill="#e8e8e8" stroke="#333" strokeWidth=".8" /><path d="M8 8V2A6 6 0 0 1 14 8Z" fill="#e0a020" /></Svg></Light>
                  <Light $w={18} $rad="0 4px 4px 0"><LockClosed /></Light>
                  <Inline $ml={7}>
                    <NumGroup $w={108} $h={18}><NumRow><Caret $dir="l" /><span>Start:</span><NumVal>1</NumVal><Caret $dir="r" /></NumRow></NumGroup>
                    <NumGroup $w={105} $h={18}><NumRow><Caret $dir="l" /><span>End:</span><NumVal>250</NumVal><Caret $dir="r" /></NumRow></NumGroup>
                  </Inline>
                  <Inline $ml={4}><NumGroup $w={84} $h={18}><NumRow><Caret $dir="l" /><NumVal>1</NumVal><Caret $dir="r" /></NumRow></NumGroup></Inline>
                  <Inline $ml={17}>
                    {playIcons.map((d, i) => <Light key={i} $w={18.5} $rad={i === 0 ? '4px 0 0 4px' : i === 5 ? '0 4px 4px 0' : '0'}><Svg $s={14}><path d={d} fill="#eee" stroke="#333" strokeWidth=".8" /></Svg></Light>)}
                  </Inline>
                  <Dark $w={107} $ml={12} $pl={7}><Spread>No Sync</Spread><Updown /></Dark>
                  <Light $w={18} $ml={16} $rad="4px"><Svg $s={13}><circle cx="8" cy="8" r="5.5" fill="#e03018" stroke="#444" /></Svg></Light>
                  <Dark $w={31} $ml={5}><Svg $s={13}><path d="M8 2L14 8L8 14L2 8Z" fill="#f0a830" /></Svg><Updown /></Dark>
                  <Light $w={121} $ml={5} $rad="4px"><KeyField /></Light>
                  <Hatch $pos="tr" />
                </Bar>
              </LeftPane>
              <RightPane>
                <Bar $h={25}>
                  <Hatch $pos="tr" />
                  <Dark $w={29} $ml={2}><Outl /><Updown /></Dark>
                  <Menu $w={98}><span>View</span><span>Search</span></Menu>
                  <AllScenes>All Scenes</AllScenes>
                </Bar>
                <ListBox>
                  <Rows>
                    {outliner.map(([n, ic, d, sel]) => (
                      <ORow key={n}>
                        <Expand>+</Expand><Conn />{ic}<OName $sel={sel}>{n}</OName><OBar />{d}
                        <Restrict><RCell><Eye /></RCell><RCell><Pointer /></RCell><RCell><Cam /></RCell></Restrict>
                      </ORow>
                    ))}
                  </Rows>
                  <Track $mt={4} $h={160}><Thumb $h={95} $top={45} /></Track>
                  <RightGap />
                </ListBox>
                <HScrollRow><HTrack><HThumb /></HTrack><Hatch $pos="bl" /></HScrollRow>
                <Bar $h={25}>
                  <Hatch $pos="tr" />
                  <Dark $w={29} $ml={2}><PropsI /><Updown /></Dark>
                  <TabStrip>{tabIcons.map((ic, i) => <PTab key={i} $on={i === 8}>{ic}</PTab>)}</TabStrip>
                </Bar>
                <PropBody>
                  <PropContent>
                    <Row $mt={5} $gap={9}>
                      <MatBox>
                        <MatRow><MatBall />Material.004</MatRow>
                        <MatFoot><MiniPlus /><DragLines /></MatFoot>
                      </MatBox>
                      <SideBtns>
                        <SideBtn $h={18}><Plus /></SideBtn>
                        <SideBtn $h={18}><MinusBar /></SideBtn>
                        <SideBtn $h={19} $dark><DownTri /></SideBtn>
                      </SideBtns>
                    </Row>
                    <Row $mt={7} $h={17} $end>
                      <Light $w={18} $h={17}><Plus /></Light>
                      <Light $w={19} $h={17} $rad="0 4px 4px 0"><Cross /></Light>
                      <Light $w={18} $h={18} $ml={9} $rad="4px"><Svg $s={15}><rect x="2" y="2" width="7" height="7" fill="#ddd" stroke="#333" strokeWidth=".6" /><rect x="7" y="7" width="7" height="7" fill="#eee" stroke="#333" strokeWidth=".6" /><path d="M10 2H14V6M2 10V14H6" fill="none" stroke="#c9a030" strokeWidth="1.2" /></Svg></Light>
                      <Dark $w={41} $h={18} $ml={9} $pl={7} $pr={1} $gap={1}><Spread>Data</Spread><Updown /></Dark>
                    </Row>
                    <Row $mt={6}>
                      <SegRow $mt={0} $w={201}>
                        <SegBtn $w={58} $dark $rad="4px 0 0 4px" />
                        <SegBtn $w={41} $dark />
                        <SegBtn $w={52} $dark>Volume</SegBtn>
                        <SegBtn $w={50} $dark $rad="0 4px 4px 0">Halo</SegBtn>
                      </SegRow>
                    </Row>
                    <Sep $mt={8} $w={205} $ml={0} />
                    <PanelHead><Arrow /><Grip /></PanelHead>
                    <Row $mt={7} $gap={9}>
                      <Prev />
                      <SideIcons>{sideIcons.map((ic, i) => <SideIcon key={i} $on={i === 1}>{ic}</SideIcon>)}</SideIcons>
                    </Row>
                    <Sep $mt={7} $w={205} $ml={0} />
                    <PanelHead><Arrow /><Grip /></PanelHead>
                    <Row $mt={7} $gap={8}>
                      <Swatch $c="#ad5038" $mark />
                      <Dark $w={96} $h={18} $pl={8}><Spread>Lambert</Spread><Updown /></Dark>
                    </Row>
                    <Row $mt={3} $h={17}>
                      <IntField>Intensit: 0.800</IntField>
                      <RampCheck />Ramp
                    </Row>
                    <Sep $mt={13} $w={205} $ml={0} />
                    <PanelHead $h={20}><Arrow />Specular<Grip /></PanelHead>
                    <Row $mt={10} $gap={8}>
                      <Swatch $c="#fbfbfb" />
                      <Dark $w={96} $h={18} $pl={8}><Spread>CookTorr</Spread><Updown /></Dark>
                    </Row>
                  </PropContent>
                  <Track $mt={7} $h={378}><Thumb $h={155} /></Track>
                </PropBody>
              </RightPane>
            </Panes>
          </Body>
          <Popup>
            <WheelRow>
              <Wheel />
              <ValueSlider><ValueDot /></ValueSlider>
            </WheelRow>
            <ModeTabs>
              <ModeTab $w={51} $on>RGB</ModeTab>
              <ModeTab $w={53}>HSV</ModeTab>
              <ModeTab $w={53}>Hex</ModeTab>
            </ModeTabs>
            <RgbRow>
              <RgbGroup>
                <RgbField $f={36}><RgbLbl>R:</RgbLbl><NumVal>0.326</NumVal></RgbField>
                <RgbField $f={14}><RgbLbl>G:</RgbLbl><NumVal>0.084</NumVal></RgbField>
                <RgbField $f={9}><RgbLbl>B:</RgbLbl><NumVal>0.040</NumVal></RgbField>
              </RgbGroup>
              <Dropper><Svg $s={14}><path d="M2 14L3 10L9 4L12 7L6 13Z" fill="#ddd" stroke="#222" strokeWidth=".9" /><path d="M9 2.5L13.5 7" stroke="#111" strokeWidth="3" /></Svg></Dropper>
            </RgbRow>
          </Popup>
          <MouseCursor width="18" height="22" viewBox="0 0 18 22">
            <path d="M3 1L14.5 14H9.5L12 19.5L9.5 21L7 15L3 18.5Z" fill="#fff" stroke="#222" strokeWidth=".8" />
          </MouseCursor>
        </Win>
      </Desktop>
      <Strip />
      <Letterbox $h={20} />
    </Page>
  );
}
